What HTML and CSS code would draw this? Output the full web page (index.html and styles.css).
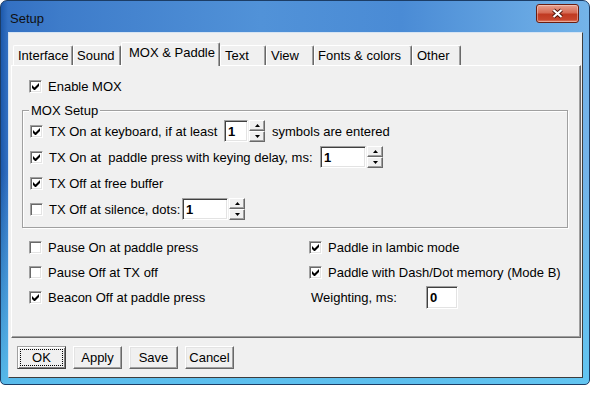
FILE: index.html
```html
<!DOCTYPE html>
<html lang="en">

<head>
    <meta charset="UTF-8">
    <title>Setup</title>
    <link rel="stylesheet" href="styles.css">
</head>

<body>
    <div class="window">
        <div class="titlebar">
            <span class="caption">Setup</span>
            <span class="close">
                <svg width="13" height="11" viewBox="0 0 13 11">
                    <path d="M2.5 2 L10.5 9 M10.5 2 L2.5 9" stroke="#4a1208" stroke-width="4" />
                    <path d="M2.5 2 L10.5 9 M10.5 2 L2.5 9" stroke="#fff" stroke-width="2.2" />
                </svg>
            </span>
        </div>

        <div class="client">
            <div class="tabs">
                <span class="tab w-interface">Interface</span>
                <span class="tab w-sound">Sound</span>
                <span class="tab tab-active w-mox">MOX &amp; Paddle</span>
                <span class="tab w-text">Text</span>
                <span class="tab w-view">View</span>
                <span class="tab w-fonts">Fonts &amp; colors</span>
                <span class="tab w-other">Other</span>
            </div>

            <div class="panel">
                <div class="row enable">
                    <span class="check"><svg viewBox="0 0 7 7" width="7" height="7"><polygon points="0,2 2.5,4.5 7,0 7,3 2.5,7.5 0,5" /></svg></span>
                    Enable MOX
                </div>

                <div class="group">
                    <div class="group-title">MOX Setup</div>
                    <div class="row">
                        <span class="check"><svg viewBox="0 0 7 7" width="7" height="7"><polygon points="0,2 2.5,4.5 7,0 7,3 2.5,7.5 0,5" /></svg></span>
                        <span class="lbl lbl-kbd">TX On at keyboard, if at least</span>
                        <input class="edit edit-small" type="text" value="1">
                        <span class="spin">
                            <span class="spin-btn"><svg width="5" height="3"><path d="M0 3h5L2.5 0z" /></svg></span>
                            <span class="spin-btn"><svg width="5" height="3"><path d="M0 0h5L2.5 3z" /></svg></span>
                        </span>
                        <span class="after">symbols are entered</span>
                    </div>
                    <div class="row">
                        <span class="check"><svg viewBox="0 0 7 7" width="7" height="7"><polygon points="0,2 2.5,4.5 7,0 7,3 2.5,7.5 0,5" /></svg></span>
                        <span class="lbl lbl-paddle">TX On at&nbsp; paddle press with keying delay, ms:</span>
                        <input class="edit" type="text" value="1">
                        <span class="spin">
                            <span class="spin-btn"><svg width="5" height="3"><path d="M0 3h5L2.5 0z" /></svg></span>
                            <span class="spin-btn"><svg width="5" height="3"><path d="M0 0h5L2.5 3z" /></svg></span>
                        </span>
                    </div>
                    <div class="row">
                        <span class="check"><svg viewBox="0 0 7 7" width="7" height="7"><polygon points="0,2 2.5,4.5 7,0 7,3 2.5,7.5 0,5" /></svg></span>
                        TX Off at free buffer
                    </div>
                    <div class="row">
                        <span class="check"></span>
                        <span class="lbl lbl-silence">TX Off at silence, dots:</span>
                        <input class="edit" type="text" value="1">
                        <span class="spin">
                            <span class="spin-btn"><svg width="5" height="3"><path d="M0 3h5L2.5 0z" /></svg></span>
                            <span class="spin-btn"><svg width="5" height="3"><path d="M0 0h5L2.5 3z" /></svg></span>
                        </span>
                    </div>
                </div>

                <div class="lower">
                    <div class="row"><span class="check"></span>Pause On at paddle press</div>
                    <div class="row">
                        <span class="check"><svg viewBox="0 0 7 7" width="7" height="7"><polygon points="0,2 2.5,4.5 7,0 7,3 2.5,7.5 0,5" /></svg></span>
                        Paddle in lambic mode
                    </div>
                    <div class="row"><span class="check"></span>Pause Off at TX off</div>
                    <div class="row">
                        <span class="check"><svg viewBox="0 0 7 7" width="7" height="7"><polygon points="0,2 2.5,4.5 7,0 7,3 2.5,7.5 0,5" /></svg></span>
                        Paddle with Dash/Dot memory (Mode B)
                    </div>
                    <div class="row">
                        <span class="check"><svg viewBox="0 0 7 7" width="7" height="7"><polygon points="0,2 2.5,4.5 7,0 7,3 2.5,7.5 0,5" /></svg></span>
                        Beacon Off at paddle press
                    </div>
                    <div class="row weight">
                        <span class="lbl lbl-weight">Weighting, ms:</span>
                        <input class="edit edit-weight" type="text" value="0">
                    </div>
                </div>
            </div>

            <div class="buttons">
                <button class="btn btn-default">OK</button>
                <button class="btn">Apply</button>
                <button class="btn">Save</button>
                <button class="btn">Cancel</button>
            </div>
        </div>
    </div>
</body>

</html>
```

FILE: styles.css
```css
* {
    box-sizing: border-box;
}

body {
    margin: 0;
    background: #fff;
    font-family: "Liberation Sans", Arial, sans-serif;
    font-size: 13px;
    color: #000;
}

/* window frame */
.window {
    width: 590px;
    height: 385px;
    padding: 0 6px 5px 7px;
    border: 1px solid #1c3d66;
    border-radius: 7px 7px 5px 5px;
    background:
        linear-gradient(to bottom, rgba(95, 200, 242, 0) 0%, rgba(95, 200, 242, 0) 45%, rgba(95, 200, 242, 0.85) 100%),
        linear-gradient(to right, #1d59ab 0, #3471c3 7px, #3e7cca 60px, #5192d8 260px, #4a8bd5 400px, #74b4e9 100%);
}

.titlebar {
    display: flex;
    align-items: flex-start;
    height: 31px;
}

.caption {
    margin: 10px 0 0 2px;
    line-height: 15px;
    color: #101010;
}

.close {
    display: flex;
    align-items: center;
    justify-content: center;
    width: 43px;
    height: 19px;
    margin: 3px 4px 0 auto;
    border: 1px solid #6a1d10;
    border-radius: 3px;
    background: linear-gradient(#e8a08e 0%, #d66b55 45%, #c03a22 55%, #c7452c 85%, #e3866c 100%);
    box-shadow: inset 0 0 0 1px rgba(255, 255, 255, 0.35);
}

.client {
    height: 346px;
    padding: 9px 0 0 2px;
    background: #f0f0f0;
    border: 1px solid;
    border-color: #d6e4f3 #3d3d3d #3d3d3d #d6e4f3;
}

/* tabs */
.tabs {
    display: flex;
    align-items: flex-end;
    height: 23px;
    padding-left: 2px;
}

.tab {
    display: flex;
    align-items: center;
    height: 20px;
    padding: 0 0 1px 4px;
    background: #f0f0f0;
    border: 1px solid;
    border-bottom: 0;
    border-color: #fff #696969 #fff #fff;
    border-radius: 2px 2px 0 0;
    box-shadow: inset -1px 0 #a0a0a0;
    white-space: nowrap;
}

.tab-active {
    position: relative;
    z-index: 1;
    height: 24px;
    margin-bottom: -1px;
    padding: 0 0 5px 7px;
}

.w-interface { width: 60px; }
.w-sound { width: 48px; padding-left: 3px; }
.w-mox { width: 99px; }
.w-text { width: 46px; }
.w-view { width: 48px; }
.w-fonts { width: 98px; padding-left: 3px; }
.w-other { width: 49px; }

.panel {
    width: 570px;
    height: 273px;
    padding: 7px 0 0 10px;
    border: 1px solid;
    border-color: #fff #696969 #696969 #fff;
    box-shadow: inset -1px -1px #a0a0a0;
}

.row {
    display: flex;
    align-items: center;
    height: 26px;
    white-space: nowrap;
}

.enable {
    padding-left: 7px;
}

.check {
    display: flex;
    align-items: center;
    justify-content: center;
    flex: none;
    width: 13px;
    height: 13px;
    margin-right: 6px;
    background: #fff;
    border: 1px solid;
    border-color: #a0a0a0 #fff #fff #a0a0a0;
    box-shadow: inset 1px 1px #696969, inset -1px -1px #e3e3e3;
}

.check svg {
    display: block;
}

/* group box */
.group {
    width: 546px;
    margin-top: 11px;
    padding: 0 0 5px 7px;
    border: 1px solid #a0a0a0;
    box-shadow: inset 1px 1px #fff, 1px 1px #fff;
}

.group-title {
    width: max-content;
    margin: -8px 0 0 -1px;
    padding: 0 2px;
    line-height: 15px;
    background: #f0f0f0;
}

.lbl {
    flex: none;
}

.lbl-kbd { width: 175px; }
.lbl-paddle { width: 271px; }
.lbl-silence { width: 133px; }
.lbl-weight { width: 115px; }

.edit {
    width: 46px;
    height: 22px;
    margin: 0;
    padding: 0 0 0 3px;
    font: bold 13px "Liberation Sans", Arial, sans-serif;
    color: #000;
    background: #fff;
    border: 1px solid;
    border-color: #a0a0a0 #fff #fff #a0a0a0;
    box-shadow: inset 1px 1px #404040, inset -1px -1px #e3e3e3;
    outline: none;
}

.edit-small { width: 24px; }

.edit-weight {
    width: 32px;
    height: 23px;
}

.spin {
    display: flex;
    flex-direction: column;
    width: 16px;
    height: 22px;
    margin-left: 1px;
}

.spin-btn {
    display: flex;
    align-items: center;
    justify-content: center;
    flex: 1;
    background: #f0f0f0;
    border: 1px solid;
    border-color: #fff #696969 #696969 #fff;
    box-shadow: inset -1px -1px #a0a0a0;
}

.spin-btn svg {
    display: block;
}

.after {
    margin-left: 7px;
}

/* lower options */
.lower {
    display: grid;
    grid-template-columns: 280px auto;
    margin-top: 7px;
    padding-left: 7px;
}

.lower .row {
    height: 25px;
}

.weight {
    padding-left: 2px;
}

/* dialog buttons */
.buttons {
    display: flex;
    gap: 7px;
    margin-top: 8px;
    padding-left: 6px;
}

.btn {
    width: 49px;
    height: 23px;
    padding: 0;
    font: 13px "Liberation Sans", Arial, sans-serif;
    color: #000;
    background: #f0f0f0;
    border: 1px solid;
    border-color: #fff #696969 #696969 #fff;
    box-shadow: inset -1px -1px #a0a0a0, inset 1px 1px #e3e3e3;
}

.btn-default {
    border-color: #a0a0a0 #404040 #404040 #a0a0a0;
    box-shadow: inset 1px 1px #fff, inset -1px -1px #808080;
    outline: 1px dotted #000;
    outline-offset: -4px;
}
```
